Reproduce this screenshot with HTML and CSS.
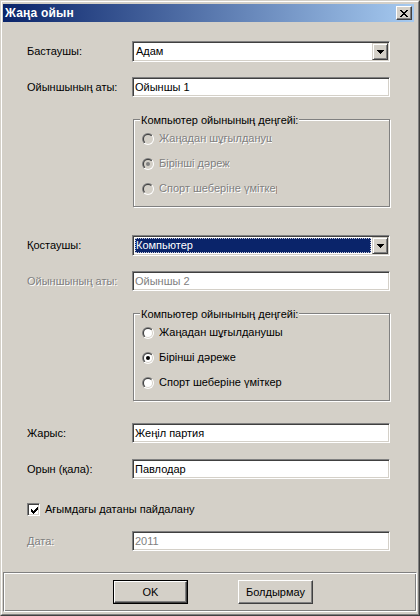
FILE: index.html
```html
<!DOCTYPE html>
<html>
<head>
<meta charset="utf-8">
<link rel="stylesheet" href="styles.css">
</head>
<body>
<svg class="defs" width="0" height="0" aria-hidden="true">
  <defs>
    <linearGradient id="ro" x1="0" y1="0" x2="1" y2="1">
      <stop offset="0.5" stop-color="#808080"/><stop offset="0.5" stop-color="#ffffff"/>
    </linearGradient>
    <linearGradient id="ri" x1="0" y1="0" x2="1" y2="1">
      <stop offset="0.5" stop-color="#404040"/><stop offset="0.5" stop-color="#d4d0c8"/>
    </linearGradient>
  </defs>
</svg>
<div class="window">
  <div class="frame">
    <div class="titlebar">
      <span class="title">Жаңа ойын</span>
      <span class="close">
        <svg width="8" height="7" viewBox="0 0 8 7" shape-rendering="crispEdges"><path d="M0 0h2v1H0z M6 0h2v1H6z M1 1h2v1H1z M5 1h2v1H5z M2 2h4v1H2z M3 3h2v1H3z M2 4h4v1H2z M1 5h2v1H1z M5 5h2v1H5z M0 6h2v1H0z M6 6h2v1H6z" fill="#000"/></svg>
      </span>
    </div>
    <div class="client">
      <div class="form">
        <div class="row">
          <span class="label">Бастаушы:</span>
          <div class="field combo">
            <span class="value">Адам</span>
            <span class="drop"><svg width="7" height="4" viewBox="0 0 7 4" shape-rendering="crispEdges"><path d="M0 0h7v1H0z M1 1h5v1H1z M2 2h3v1H2z M3 3h1v1H3z" fill="#000"/></svg></span>
          </div>
        </div>
        <div class="row gap-s">
          <span class="label">Ойыншының аты:</span>
          <div class="field edit"><span class="text">Ойыншы 1</span></div>
        </div>
        <div class="group gap-m">
          <span class="legend">Компьютер ойынының деңгейі:</span>
          <div class="radio disabled">
            <svg width="12" height="12" viewBox="0 0 12 12"><circle cx="6" cy="6" r="6" fill="url(#ro)"/><circle cx="6" cy="6" r="5" fill="url(#ri)"/><circle cx="6" cy="6" r="4" fill="#d4d0c8"/></svg>
            <span class="rlabel clip-a">Жаңадан шұғылданушы</span>
          </div>
          <div class="radio disabled">
            <svg width="12" height="12" viewBox="0 0 12 12"><circle cx="6" cy="6" r="6" fill="url(#ro)"/><circle cx="6" cy="6" r="5" fill="url(#ri)"/><circle cx="6" cy="6" r="4" fill="#d4d0c8"/><circle cx="6" cy="6" r="2" fill="#808080"/></svg>
            <span class="rlabel clip-b">Бірінші дәреже</span>
          </div>
          <div class="radio disabled">
            <svg width="12" height="12" viewBox="0 0 12 12"><circle cx="6" cy="6" r="6" fill="url(#ro)"/><circle cx="6" cy="6" r="5" fill="url(#ri)"/><circle cx="6" cy="6" r="4" fill="#d4d0c8"/></svg>
            <span class="rlabel clip-c">Спорт шеберіне үміткер</span>
          </div>
        </div>
        <div class="row gap-l">
          <span class="label">Қостаушы:</span>
          <div class="field combo">
            <span class="value selected">Компьютер</span>
            <span class="drop"><svg width="7" height="4" viewBox="0 0 7 4" shape-rendering="crispEdges"><path d="M0 0h7v1H0z M1 1h5v1H1z M2 2h3v1H2z M3 3h1v1H3z" fill="#000"/></svg></span>
          </div>
        </div>
        <div class="row gap-s">
          <span class="label disabled-text">Ойыншының аты:</span>
          <div class="field edit"><span class="text dim">Ойыншы 2</span></div>
        </div>
        <div class="group gap-m">
          <span class="legend">Компьютер ойынының деңгейі:</span>
          <div class="radio">
            <svg width="12" height="12" viewBox="0 0 12 12"><circle cx="6" cy="6" r="6" fill="url(#ro)"/><circle cx="6" cy="6" r="5" fill="url(#ri)"/><circle cx="6" cy="6" r="4" fill="#fff"/></svg>
            <span class="rlabel">Жаңадан шұғылданушы</span>
          </div>
          <div class="radio">
            <svg width="12" height="12" viewBox="0 0 12 12"><circle cx="6" cy="6" r="6" fill="url(#ro)"/><circle cx="6" cy="6" r="5" fill="url(#ri)"/><circle cx="6" cy="6" r="4" fill="#fff"/><circle cx="6" cy="6" r="2" fill="#000"/></svg>
            <span class="rlabel">Бірінші дәреже</span>
          </div>
          <div class="radio">
            <svg width="12" height="12" viewBox="0 0 12 12"><circle cx="6" cy="6" r="6" fill="url(#ro)"/><circle cx="6" cy="6" r="5" fill="url(#ri)"/><circle cx="6" cy="6" r="4" fill="#fff"/></svg>
            <span class="rlabel">Спорт шеберіне үміткер</span>
          </div>
        </div>
        <div class="row gap-m">
          <span class="label">Жарыс:</span>
          <div class="field edit"><span class="text">Жеңіл партия</span></div>
        </div>
        <div class="row gap-s1">
          <span class="label">Орын (қала):</span>
          <div class="field edit"><span class="text">Павлодар</span></div>
        </div>
        <div class="checkrow gap-x">
          <span class="checkbox"><svg width="7" height="7" viewBox="0 0 7 7" shape-rendering="crispEdges"><path d="M0 2h1v3H0z M1 3h1v3H1z M2 4h1v3H2z M3 3h1v3H3z M4 2h1v3H4z M5 1h1v3H5z M6 0h1v3H6z" fill="#000"/></svg></span>
          <span class="checklabel">Ағымдағы датаны пайдалану</span>
        </div>
        <div class="row gap-s">
          <span class="label disabled-text">Дата:</span>
          <div class="field edit"><span class="text dim">2011</span></div>
        </div>
      </div>
      <div class="panel">
        <div class="btn-default"><div class="btn">OK</div></div>
        <div class="btn">Болдырмау</div>
      </div>
    </div>
  </div>
</div>
</body>
</html>
```
FILE: styles.css
```css
* { box-sizing: border-box; }
html, body { margin: 0; padding: 0; }
body {
  width: 420px;
  height: 616px;
  overflow: hidden;
  background: #d4d0c8;
  font-family: "Liberation Sans", Arial, sans-serif;
  font-size: 11px;
  line-height: 13px;
  color: #000;
}
.defs { display: block; width: 0; height: 0; position: absolute; }

.window {
  width: 420px;
  height: 616px;
  background: #d4d0c8;
  border: 1px solid;
  border-color: #d4d0c8 #404040 #404040 #d4d0c8;
}
.frame {
  height: 100%;
  border: 1px solid;
  border-color: #ffffff #808080 #808080 #ffffff;
  padding: 2px 1px;
  display: flex;
  flex-direction: column;
}
.titlebar {
  height: 18px;
  margin-right: 3px;
  padding: 0 2px 0 2px;
  background: linear-gradient(to right, #0a246a, #a6caf0);
  display: flex;
  align-items: center;
  justify-content: space-between;
}
.title { color: #fff; font-weight: bold; font-size: 12px; letter-spacing: 0.2px; }
.close {
  width: 16px;
  height: 14px;
  background: #d4d0c8;
  border: 1px solid;
  border-color: #ffffff #404040 #404040 #ffffff;
  box-shadow: inset -1px -1px #808080, inset 1px 1px #d4d0c8;
  display: flex;
  align-items: center;
  justify-content: center;
}
.close svg { display: block; }

.client { flex: 1; display: flex; flex-direction: column; }
.form { flex: 1; padding: 19px 0 0 24px; }

.row { display: flex; align-items: baseline; }
.label { width: 105px; flex: none; }
.disabled-text { color: #808080; text-shadow: 1px 1px 0 #fff; }

.gap-s { margin-top: 15px; }
.gap-s1 { margin-top: 16px; }
.gap-m { margin-top: 22px; }
.gap-l { margin-top: 28px; }
.gap-x { margin-top: 24px; }

.field {
  width: 258px;
  background: #fff;
  border: 1px solid;
  border-color: #808080 #ffffff #ffffff #808080;
  padding: 1px;
  box-shadow: inset 1px 1px #404040, inset -1px -1px #d4d0c8;
}
.combo { height: 21px; display: flex; }
.value {
  flex: 1;
  margin: 1px;
  height: 15px;
  line-height: 15px;
  padding-left: 1px;
}
.value.selected {
  background: #0a246a;
  color: #fff;
  outline: 1px dotted #c8c8d8;
  outline-offset: -1px;
}
.drop {
  width: 16px;
  height: 17px;
  flex: none;
  background: #d4d0c8;
  border: 1px solid;
  border-color: #d4d0c8 #404040 #404040 #d4d0c8;
  box-shadow: inset 1px 1px #fff, inset -1px -1px #808080;
  display: flex;
  align-items: center;
  justify-content: center;
}
.drop svg { display: block; margin-top: 1px; }

.edit { height: 20px; }
.text { display: block; padding: 2px 0 0 1px; white-space: nowrap; }
.dim { color: #808080; }

.group {
  margin-left: 106px;
  width: 257px;
  height: 88px;
  border: 1px solid #808080;
  box-shadow: inset 1px 1px #fff, 1px 1px #fff;
  padding: 0 0 0 8px;
}
.legend {
  display: block;
  width: max-content;
  margin: -6px 0 -1px -2px;
  padding: 0 1px;
  background: #d4d0c8;
}
.radio { height: 25px; display: flex; align-items: center; gap: 5px; }
.radio svg { display: block; flex: none; }
.rlabel { white-space: nowrap; overflow: hidden; }
.radio.disabled .rlabel { color: #808080; text-shadow: 1px 1px 0 #fff; }
.clip-a { width: 113px; }
.clip-b { width: 71px; }
.clip-c { width: 118px; }

.checkrow { display: flex; align-items: center; gap: 5px; height: 13px; }
.checkbox {
  width: 13px;
  height: 13px;
  flex: none;
  background: #fff;
  border: 1px solid;
  border-color: #808080 #ffffff #ffffff #808080;
  box-shadow: inset 1px 1px #404040, inset -1px -1px #d4d0c8;
  padding: 2px;
}
.checkbox svg { display: block; margin: 1px; }

.panel {
  height: 40px;
  flex: none;
  border: 1px solid;
  border-color: #808080 #ffffff #ffffff #808080;
  box-shadow: inset 1px 1px #fff, inset -1px -1px #808080;
  padding: 7px 0 0 109px;
  display: flex;
  align-items: flex-start;
  gap: 50px;
}
.btn {
  width: 75px;
  height: 24px;
  background: #d4d0c8;
  border: 1px solid;
  border-color: #ffffff #404040 #404040 #ffffff;
  box-shadow: inset -1px -1px #808080, inset 1px 1px #d4d0c8;
  display: flex;
  align-items: center;
  justify-content: center;
}
.btn-default { width: 75px; height: 24px; border: 1px solid #000; }
.btn-default .btn { width: 73px; height: 22px; }
```
